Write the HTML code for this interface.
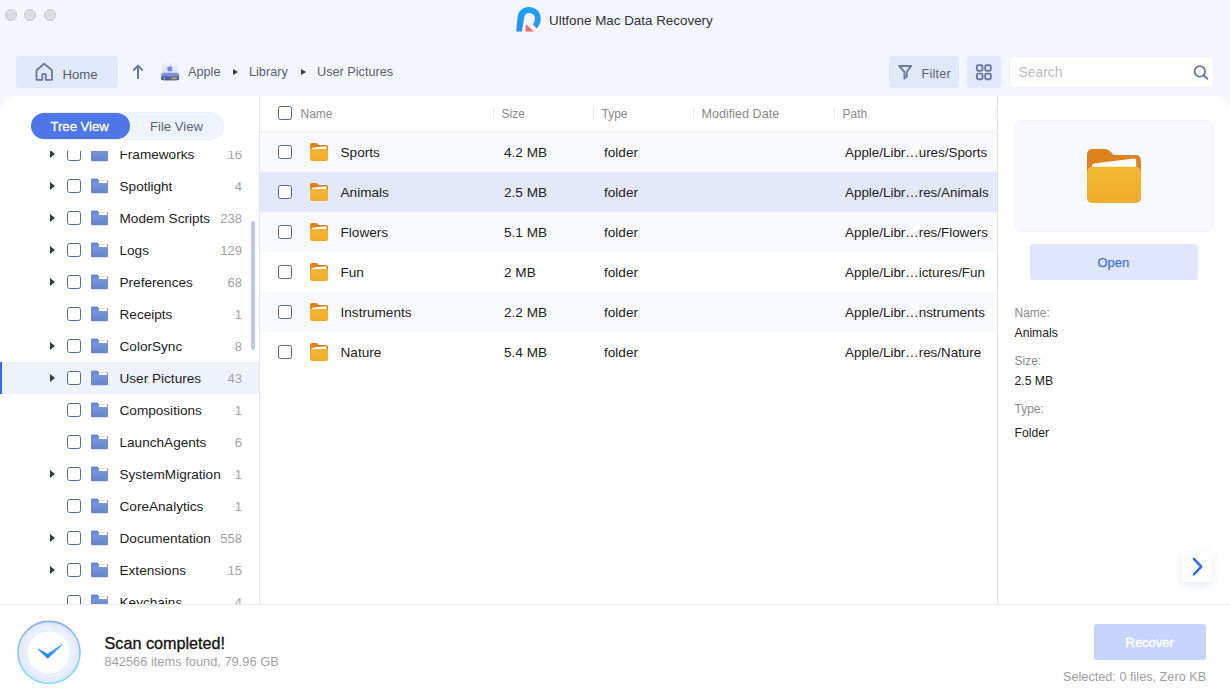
<!DOCTYPE html>
<html><head><meta charset="utf-8">
<style>
*{margin:0;padding:0;box-sizing:border-box}
html,body{width:1230px;height:700px;overflow:hidden;background:#f3f6fe;font-family:"Liberation Sans",sans-serif;color:#222}
.a{position:absolute}
.t{position:absolute;white-space:nowrap;line-height:1}
.dot{position:absolute;top:9px;width:12px;height:12px;border-radius:50%;background:#dcdde0;border:1px solid #c9cacd}
.btn{position:absolute;background:#e2e8fb;border-radius:4px}
.panel{position:absolute;left:0;top:96px;width:1230px;height:508px;background:#fff;border-radius:15px 15px 0 0}
.cb{position:absolute;width:14px;height:14px;border:1px solid #56679b;border-radius:2.5px;background:#fff}
.tri{position:absolute;width:0;height:0;border-left:5px solid #2f3a58;border-top:4px solid transparent;border-bottom:4px solid transparent}
.trow .name{font-size:13.6px;color:#222}
.cnt{position:absolute;font-size:13px;color:#a3a3a3;text-align:right;white-space:nowrap;line-height:1}
</style></head><body>
<!-- traffic lights -->
<div class="dot" style="left:5px"></div>
<div class="dot" style="left:24px"></div>
<div class="dot" style="left:44px"></div>

<!-- logo + title -->
<svg class="a" style="left:514px;top:5px" width="30" height="30" viewBox="0 0 30 30">
 <defs><linearGradient id="lg" x1="0" y1="0" x2="0" y2="1"><stop offset="0" stop-color="#1fa3f5"/><stop offset="1" stop-color="#2b8ef0"/></linearGradient></defs>
 <path d="M2.1 26.6 L3.6 12 C4.2 6 8.8 2 14.9 2 C21.5 2 26.8 7 26.8 13.8 C26.8 17.4 25.2 20.6 22.6 23.4 L18.9 19.3 C20.3 17.7 20.9 15.6 20.9 13.6 C20.9 10.4 18.4 8 15 8 C12.2 8 10.5 10 10.2 12.5 L7.8 26.6 Z" fill="url(#lg)"/>
 <path d="M11.7 18.9 L19.9 26.6 L11.7 26.6 Z" fill="#f26b6b"/>
</svg>
<div class="t" style="left:549px;top:14px;font-size:13.4px;color:#2f3136">Ultfone Mac Data Recovery</div>

<!-- toolbar -->
<div class="btn" style="left:16px;top:56px;width:102px;height:32px"></div>
<svg class="a" style="left:34px;top:62px" width="20" height="20" viewBox="0 0 20 20">
 <path d="M2.5 17.8 V8.2 L10.2 1.7 L18 8.2 V17.8 H11.8 V12.2 H8.3 V17.8 Z" fill="none" stroke="#6a78a2" stroke-width="1.8" stroke-linejoin="round"/>
</svg>
<div class="t" style="left:62.5px;top:67.5px;font-size:13.2px;color:#565b68">Home</div>
<svg class="a" style="left:130px;top:63px" width="16" height="18" viewBox="0 0 16 18">
 <path d="M8 15.2 V2.8 M3.9 6.9 L8 2.6 L12.1 6.9" fill="none" stroke="#6676a3" stroke-width="2" stroke-linecap="round" stroke-linejoin="round"/>
</svg>
<!-- drive icon -->
<svg class="a" style="left:160px;top:62px" width="20" height="20" viewBox="0 0 20 20">
 <defs><linearGradient id="dg" x1="0" y1="0" x2="0" y2="1"><stop offset="0" stop-color="#eff1fd"/><stop offset="1" stop-color="#d8dcf7"/></linearGradient>
 <linearGradient id="sg" x1="0" y1="0" x2="0" y2="1"><stop offset="0" stop-color="#8597e0"/><stop offset="1" stop-color="#6275c6"/></linearGradient></defs>
 <rect x="2.2" y="1" width="15.8" height="11" rx="2" fill="url(#dg)"/>
 <rect x="1.2" y="10.8" width="17.8" height="7.4" rx="2" fill="url(#sg)"/>
 <path d="M1.2 14.8 H19 V16.2 Q19 18.2 17 18.2 H3.2 Q1.2 18.2 1.2 16.2 Z" fill="#4d5c98"/>
 <circle cx="4.4" cy="16.4" r="0.75" fill="#86e8ff"/>
 <rect x="11.2" y="15.6" width="5.6" height="1.6" fill="#e2a956"/>
 <path d="M10 5.1 C10.6 4.4 11.7 4.5 12.2 5.1 C11.4 5.6 11.5 6.9 12.5 7.3 C12.2 8.2 11.6 9.4 10.9 9.4 C10.5 9.4 10.3 9.2 9.9 9.2 C9.5 9.2 9.2 9.4 8.8 9.4 C8 9.4 7.2 7.8 7.2 6.7 C7.2 5.3 8.2 4.6 9 4.7 C9.4 4.7 9.7 4.9 10 5.1 Z M10 4.5 C10 3.9 10.4 3.3 11 3.2 C11.1 3.8 10.6 4.5 10 4.5 Z" fill="#6a86e2"/>
</svg>
<div class="t" style="left:188px;top:66px;font-size:12.7px;color:#575f70">Apple</div>
<div class="a" style="left:233px;top:69px;width:0;height:0;border-left:5px solid #2f3a58;border-top:3px solid transparent;border-bottom:3px solid transparent"></div>
<div class="t" style="left:249px;top:66px;font-size:12.7px;color:#575f70">Library</div>
<div class="a" style="left:301px;top:69px;width:0;height:0;border-left:5px solid #2f3a58;border-top:3px solid transparent;border-bottom:3px solid transparent"></div>
<div class="t" style="left:317px;top:66px;font-size:12.7px;color:#575f70">User Pictures</div>

<div class="btn" style="left:889px;top:56px;width:70px;height:32px"></div>
<svg class="a" style="left:896px;top:63px" width="18" height="18" viewBox="0 0 18 18">
 <path d="M3.2 3 H15.2 L10.8 8.8 V13.4 L8.4 15.4 V8.8 Z" fill="none" stroke="#6a78a2" stroke-width="1.9" stroke-linejoin="round"/>
</svg>
<div class="t" style="left:921.5px;top:68px;font-size:12.5px;letter-spacing:0.3px;color:#575f70">Filter</div>
<div class="btn" style="left:967px;top:56px;width:34px;height:32px"></div>
<svg class="a" style="left:975px;top:63px" width="18" height="18" viewBox="0 0 18 18">
 <g fill="none" stroke="#6a78a2" stroke-width="1.9"><rect x="1.9" y="2.2" width="5.6" height="5.6" rx="1.2"/><rect x="10.2" y="2.2" width="5.6" height="5.6" rx="1.2"/><rect x="1.9" y="10.6" width="5.6" height="5.6" rx="1.2"/><rect x="10.2" y="10.6" width="5.6" height="5.6" rx="1.2"/></g>
</svg>
<div class="a" style="left:1010px;top:57px;width:203px;height:30px;background:#fff;border-radius:4px;box-shadow:0 0 0 0.5px #e9edf7"></div>
<div class="t" style="left:1018.5px;top:66px;font-size:13.9px;color:#bcbdc0">Search</div>
<svg class="a" style="left:1191px;top:62px" width="20" height="20" viewBox="0 0 20 20">
 <circle cx="8.8" cy="9.4" r="5.2" fill="none" stroke="#6676a3" stroke-width="1.8"/>
 <path d="M12.6 13.2 L16.4 16.8" stroke="#6676a3" stroke-width="1.9" stroke-linecap="round"/>
</svg>

<!-- main white panel -->
<div class="panel"></div>

<!-- sidebar -->
<div class="a" style="left:259px;top:96px;width:1px;height:508px;background:#e4e6ea"></div>
<div class="a" style="left:31px;top:112px;width:193px;height:28px;background:#eff3fb;border:1px solid #e9eef9;border-radius:14px"></div>
<div class="a" style="left:31px;top:113px;width:99px;height:26px;background:#4f76e9;border-radius:13px"></div>
<div class="t" style="left:50.5px;top:120px;font-size:13.1px;color:#fff;-webkit-text-stroke:0.3px #fff">Tree View</div>
<div class="t" style="left:150px;top:120px;font-size:13.1px;color:#5d6270">File View</div>
<div class="a" style="left:0;top:151px;width:259px;height:453px;overflow:hidden">
<div class="tri" style="left:50px;top:-1px;border-left-color:#2f3a58"></div>
<div class="cb" style="left:67px;top:-4px"></div>
<svg class="a" style="left:91px;top:-5px" width="17" height="16" viewBox="0 0 17 16"><defs><linearGradient id="bf0" x1="0" y1="0" x2="0" y2="1"><stop offset="0" stop-color="#7892da"/><stop offset="1" stop-color="#6783cc"/></linearGradient><linearGradient id="bp0" x1="0" y1="0" x2="0" y2="1"><stop offset="0" stop-color="#b9c3e3"/><stop offset="0.35" stop-color="#ffffff"/></linearGradient></defs><path d="M0 1.9 Q0 0.6 1.3 0.6 H6 Q6.5 0.6 6.9 1 L7.8 1.9 H15.7 Q17 1.9 17 3.2 V6 H0 Z" fill="#6d88d4"/><rect x="7.8" y="1.9" width="8.3" height="3.4" rx="0.6" fill="url(#bp0)"/><path d="M0 5.3 H17 V13.9 Q17 15.2 15.7 15.2 H1.3 Q0 15.2 0 13.9 Z" fill="url(#bf0)"/></svg>
<div class="t" style="left:119.5px;top:-3.5px;font-size:13.6px;color:#222">Frameworks</div>
<div class="cnt" style="right:17px;top:-3.5px">16</div>
<div class="tri" style="left:50px;top:31px;border-left-color:#2f3a58"></div>
<div class="cb" style="left:67px;top:28px"></div>
<svg class="a" style="left:91px;top:27px" width="17" height="16" viewBox="0 0 17 16"><defs><linearGradient id="bf1" x1="0" y1="0" x2="0" y2="1"><stop offset="0" stop-color="#7892da"/><stop offset="1" stop-color="#6783cc"/></linearGradient><linearGradient id="bp1" x1="0" y1="0" x2="0" y2="1"><stop offset="0" stop-color="#b9c3e3"/><stop offset="0.35" stop-color="#ffffff"/></linearGradient></defs><path d="M0 1.9 Q0 0.6 1.3 0.6 H6 Q6.5 0.6 6.9 1 L7.8 1.9 H15.7 Q17 1.9 17 3.2 V6 H0 Z" fill="#6d88d4"/><rect x="7.8" y="1.9" width="8.3" height="3.4" rx="0.6" fill="url(#bp1)"/><path d="M0 5.3 H17 V13.9 Q17 15.2 15.7 15.2 H1.3 Q0 15.2 0 13.9 Z" fill="url(#bf1)"/></svg>
<div class="t" style="left:119.5px;top:28.5px;font-size:13.6px;color:#222">Spotlight</div>
<div class="cnt" style="right:17px;top:28.5px">4</div>
<div class="tri" style="left:50px;top:63px;border-left-color:#2f3a58"></div>
<div class="cb" style="left:67px;top:60px"></div>
<svg class="a" style="left:91px;top:59px" width="17" height="16" viewBox="0 0 17 16"><defs><linearGradient id="bf2" x1="0" y1="0" x2="0" y2="1"><stop offset="0" stop-color="#7892da"/><stop offset="1" stop-color="#6783cc"/></linearGradient><linearGradient id="bp2" x1="0" y1="0" x2="0" y2="1"><stop offset="0" stop-color="#b9c3e3"/><stop offset="0.35" stop-color="#ffffff"/></linearGradient></defs><path d="M0 1.9 Q0 0.6 1.3 0.6 H6 Q6.5 0.6 6.9 1 L7.8 1.9 H15.7 Q17 1.9 17 3.2 V6 H0 Z" fill="#6d88d4"/><rect x="7.8" y="1.9" width="8.3" height="3.4" rx="0.6" fill="url(#bp2)"/><path d="M0 5.3 H17 V13.9 Q17 15.2 15.7 15.2 H1.3 Q0 15.2 0 13.9 Z" fill="url(#bf2)"/></svg>
<div class="t" style="left:119.5px;top:60.5px;font-size:13.6px;color:#222">Modem Scripts</div>
<div class="cnt" style="right:17px;top:60.5px">238</div>
<div class="tri" style="left:50px;top:95px;border-left-color:#2f3a58"></div>
<div class="cb" style="left:67px;top:92px"></div>
<svg class="a" style="left:91px;top:91px" width="17" height="16" viewBox="0 0 17 16"><defs><linearGradient id="bf3" x1="0" y1="0" x2="0" y2="1"><stop offset="0" stop-color="#7892da"/><stop offset="1" stop-color="#6783cc"/></linearGradient><linearGradient id="bp3" x1="0" y1="0" x2="0" y2="1"><stop offset="0" stop-color="#b9c3e3"/><stop offset="0.35" stop-color="#ffffff"/></linearGradient></defs><path d="M0 1.9 Q0 0.6 1.3 0.6 H6 Q6.5 0.6 6.9 1 L7.8 1.9 H15.7 Q17 1.9 17 3.2 V6 H0 Z" fill="#6d88d4"/><rect x="7.8" y="1.9" width="8.3" height="3.4" rx="0.6" fill="url(#bp3)"/><path d="M0 5.3 H17 V13.9 Q17 15.2 15.7 15.2 H1.3 Q0 15.2 0 13.9 Z" fill="url(#bf3)"/></svg>
<div class="t" style="left:119.5px;top:92.5px;font-size:13.6px;color:#222">Logs</div>
<div class="cnt" style="right:17px;top:92.5px">129</div>
<div class="tri" style="left:50px;top:127px;border-left-color:#2f3a58"></div>
<div class="cb" style="left:67px;top:124px"></div>
<svg class="a" style="left:91px;top:123px" width="17" height="16" viewBox="0 0 17 16"><defs><linearGradient id="bf4" x1="0" y1="0" x2="0" y2="1"><stop offset="0" stop-color="#7892da"/><stop offset="1" stop-color="#6783cc"/></linearGradient><linearGradient id="bp4" x1="0" y1="0" x2="0" y2="1"><stop offset="0" stop-color="#b9c3e3"/><stop offset="0.35" stop-color="#ffffff"/></linearGradient></defs><path d="M0 1.9 Q0 0.6 1.3 0.6 H6 Q6.5 0.6 6.9 1 L7.8 1.9 H15.7 Q17 1.9 17 3.2 V6 H0 Z" fill="#6d88d4"/><rect x="7.8" y="1.9" width="8.3" height="3.4" rx="0.6" fill="url(#bp4)"/><path d="M0 5.3 H17 V13.9 Q17 15.2 15.7 15.2 H1.3 Q0 15.2 0 13.9 Z" fill="url(#bf4)"/></svg>
<div class="t" style="left:119.5px;top:124.5px;font-size:13.6px;color:#222">Preferences</div>
<div class="cnt" style="right:17px;top:124.5px">68</div>
<div class="cb" style="left:67px;top:156px"></div>
<svg class="a" style="left:91px;top:155px" width="17" height="16" viewBox="0 0 17 16"><defs><linearGradient id="bf5" x1="0" y1="0" x2="0" y2="1"><stop offset="0" stop-color="#7892da"/><stop offset="1" stop-color="#6783cc"/></linearGradient><linearGradient id="bp5" x1="0" y1="0" x2="0" y2="1"><stop offset="0" stop-color="#b9c3e3"/><stop offset="0.35" stop-color="#ffffff"/></linearGradient></defs><path d="M0 1.9 Q0 0.6 1.3 0.6 H6 Q6.5 0.6 6.9 1 L7.8 1.9 H15.7 Q17 1.9 17 3.2 V6 H0 Z" fill="#6d88d4"/><rect x="7.8" y="1.9" width="8.3" height="3.4" rx="0.6" fill="url(#bp5)"/><path d="M0 5.3 H17 V13.9 Q17 15.2 15.7 15.2 H1.3 Q0 15.2 0 13.9 Z" fill="url(#bf5)"/></svg>
<div class="t" style="left:119.5px;top:156.5px;font-size:13.6px;color:#222">Receipts</div>
<div class="cnt" style="right:17px;top:156.5px">1</div>
<div class="tri" style="left:50px;top:191px;border-left-color:#2f3a58"></div>
<div class="cb" style="left:67px;top:188px"></div>
<svg class="a" style="left:91px;top:187px" width="17" height="16" viewBox="0 0 17 16"><defs><linearGradient id="bf6" x1="0" y1="0" x2="0" y2="1"><stop offset="0" stop-color="#7892da"/><stop offset="1" stop-color="#6783cc"/></linearGradient><linearGradient id="bp6" x1="0" y1="0" x2="0" y2="1"><stop offset="0" stop-color="#b9c3e3"/><stop offset="0.35" stop-color="#ffffff"/></linearGradient></defs><path d="M0 1.9 Q0 0.6 1.3 0.6 H6 Q6.5 0.6 6.9 1 L7.8 1.9 H15.7 Q17 1.9 17 3.2 V6 H0 Z" fill="#6d88d4"/><rect x="7.8" y="1.9" width="8.3" height="3.4" rx="0.6" fill="url(#bp6)"/><path d="M0 5.3 H17 V13.9 Q17 15.2 15.7 15.2 H1.3 Q0 15.2 0 13.9 Z" fill="url(#bf6)"/></svg>
<div class="t" style="left:119.5px;top:188.5px;font-size:13.6px;color:#222">ColorSync</div>
<div class="cnt" style="right:17px;top:188.5px">8</div>
<div class="a" style="left:0;top:211px;width:259px;height:32px;background:#eef2fd"></div>
<div class="a" style="left:0;top:211px;width:2px;height:32px;background:#2e6cf6"></div>
<div class="tri" style="left:50px;top:223px;border-left-color:#2f3a58"></div>
<div class="cb" style="left:67px;top:220px"></div>
<svg class="a" style="left:91px;top:219px" width="17" height="16" viewBox="0 0 17 16"><defs><linearGradient id="bf7" x1="0" y1="0" x2="0" y2="1"><stop offset="0" stop-color="#7892da"/><stop offset="1" stop-color="#6783cc"/></linearGradient><linearGradient id="bp7" x1="0" y1="0" x2="0" y2="1"><stop offset="0" stop-color="#b9c3e3"/><stop offset="0.35" stop-color="#ffffff"/></linearGradient></defs><path d="M0 1.9 Q0 0.6 1.3 0.6 H6 Q6.5 0.6 6.9 1 L7.8 1.9 H15.7 Q17 1.9 17 3.2 V6 H0 Z" fill="#6d88d4"/><rect x="7.8" y="1.9" width="8.3" height="3.4" rx="0.6" fill="url(#bp7)"/><path d="M0 5.3 H17 V13.9 Q17 15.2 15.7 15.2 H1.3 Q0 15.2 0 13.9 Z" fill="url(#bf7)"/></svg>
<div class="t" style="left:119.5px;top:220.5px;font-size:13.6px;color:#222">User Pictures</div>
<div class="cnt" style="right:17px;top:220.5px">43</div>
<div class="cb" style="left:67px;top:252px"></div>
<svg class="a" style="left:91px;top:251px" width="17" height="16" viewBox="0 0 17 16"><defs><linearGradient id="bf8" x1="0" y1="0" x2="0" y2="1"><stop offset="0" stop-color="#7892da"/><stop offset="1" stop-color="#6783cc"/></linearGradient><linearGradient id="bp8" x1="0" y1="0" x2="0" y2="1"><stop offset="0" stop-color="#b9c3e3"/><stop offset="0.35" stop-color="#ffffff"/></linearGradient></defs><path d="M0 1.9 Q0 0.6 1.3 0.6 H6 Q6.5 0.6 6.9 1 L7.8 1.9 H15.7 Q17 1.9 17 3.2 V6 H0 Z" fill="#6d88d4"/><rect x="7.8" y="1.9" width="8.3" height="3.4" rx="0.6" fill="url(#bp8)"/><path d="M0 5.3 H17 V13.9 Q17 15.2 15.7 15.2 H1.3 Q0 15.2 0 13.9 Z" fill="url(#bf8)"/></svg>
<div class="t" style="left:119.5px;top:252.5px;font-size:13.6px;color:#222">Compositions</div>
<div class="cnt" style="right:17px;top:252.5px">1</div>
<div class="cb" style="left:67px;top:284px"></div>
<svg class="a" style="left:91px;top:283px" width="17" height="16" viewBox="0 0 17 16"><defs><linearGradient id="bf9" x1="0" y1="0" x2="0" y2="1"><stop offset="0" stop-color="#7892da"/><stop offset="1" stop-color="#6783cc"/></linearGradient><linearGradient id="bp9" x1="0" y1="0" x2="0" y2="1"><stop offset="0" stop-color="#b9c3e3"/><stop offset="0.35" stop-color="#ffffff"/></linearGradient></defs><path d="M0 1.9 Q0 0.6 1.3 0.6 H6 Q6.5 0.6 6.9 1 L7.8 1.9 H15.7 Q17 1.9 17 3.2 V6 H0 Z" fill="#6d88d4"/><rect x="7.8" y="1.9" width="8.3" height="3.4" rx="0.6" fill="url(#bp9)"/><path d="M0 5.3 H17 V13.9 Q17 15.2 15.7 15.2 H1.3 Q0 15.2 0 13.9 Z" fill="url(#bf9)"/></svg>
<div class="t" style="left:119.5px;top:284.5px;font-size:13.6px;color:#222">LaunchAgents</div>
<div class="cnt" style="right:17px;top:284.5px">6</div>
<div class="tri" style="left:50px;top:319px;border-left-color:#2f3a58"></div>
<div class="cb" style="left:67px;top:316px"></div>
<svg class="a" style="left:91px;top:315px" width="17" height="16" viewBox="0 0 17 16"><defs><linearGradient id="bf10" x1="0" y1="0" x2="0" y2="1"><stop offset="0" stop-color="#7892da"/><stop offset="1" stop-color="#6783cc"/></linearGradient><linearGradient id="bp10" x1="0" y1="0" x2="0" y2="1"><stop offset="0" stop-color="#b9c3e3"/><stop offset="0.35" stop-color="#ffffff"/></linearGradient></defs><path d="M0 1.9 Q0 0.6 1.3 0.6 H6 Q6.5 0.6 6.9 1 L7.8 1.9 H15.7 Q17 1.9 17 3.2 V6 H0 Z" fill="#6d88d4"/><rect x="7.8" y="1.9" width="8.3" height="3.4" rx="0.6" fill="url(#bp10)"/><path d="M0 5.3 H17 V13.9 Q17 15.2 15.7 15.2 H1.3 Q0 15.2 0 13.9 Z" fill="url(#bf10)"/></svg>
<div class="t" style="left:119.5px;top:316.5px;font-size:13.6px;color:#222">SystemMigration</div>
<div class="cnt" style="right:17px;top:316.5px">1</div>
<div class="cb" style="left:67px;top:348px"></div>
<svg class="a" style="left:91px;top:347px" width="17" height="16" viewBox="0 0 17 16"><defs><linearGradient id="bf11" x1="0" y1="0" x2="0" y2="1"><stop offset="0" stop-color="#7892da"/><stop offset="1" stop-color="#6783cc"/></linearGradient><linearGradient id="bp11" x1="0" y1="0" x2="0" y2="1"><stop offset="0" stop-color="#b9c3e3"/><stop offset="0.35" stop-color="#ffffff"/></linearGradient></defs><path d="M0 1.9 Q0 0.6 1.3 0.6 H6 Q6.5 0.6 6.9 1 L7.8 1.9 H15.7 Q17 1.9 17 3.2 V6 H0 Z" fill="#6d88d4"/><rect x="7.8" y="1.9" width="8.3" height="3.4" rx="0.6" fill="url(#bp11)"/><path d="M0 5.3 H17 V13.9 Q17 15.2 15.7 15.2 H1.3 Q0 15.2 0 13.9 Z" fill="url(#bf11)"/></svg>
<div class="t" style="left:119.5px;top:348.5px;font-size:13.6px;color:#222">CoreAnalytics</div>
<div class="cnt" style="right:17px;top:348.5px">1</div>
<div class="tri" style="left:50px;top:383px;border-left-color:#2f3a58"></div>
<div class="cb" style="left:67px;top:380px"></div>
<svg class="a" style="left:91px;top:379px" width="17" height="16" viewBox="0 0 17 16"><defs><linearGradient id="bf12" x1="0" y1="0" x2="0" y2="1"><stop offset="0" stop-color="#7892da"/><stop offset="1" stop-color="#6783cc"/></linearGradient><linearGradient id="bp12" x1="0" y1="0" x2="0" y2="1"><stop offset="0" stop-color="#b9c3e3"/><stop offset="0.35" stop-color="#ffffff"/></linearGradient></defs><path d="M0 1.9 Q0 0.6 1.3 0.6 H6 Q6.5 0.6 6.9 1 L7.8 1.9 H15.7 Q17 1.9 17 3.2 V6 H0 Z" fill="#6d88d4"/><rect x="7.8" y="1.9" width="8.3" height="3.4" rx="0.6" fill="url(#bp12)"/><path d="M0 5.3 H17 V13.9 Q17 15.2 15.7 15.2 H1.3 Q0 15.2 0 13.9 Z" fill="url(#bf12)"/></svg>
<div class="t" style="left:119.5px;top:380.5px;font-size:13.6px;color:#222">Documentation</div>
<div class="cnt" style="right:17px;top:380.5px">558</div>
<div class="tri" style="left:50px;top:415px;border-left-color:#2f3a58"></div>
<div class="cb" style="left:67px;top:412px"></div>
<svg class="a" style="left:91px;top:411px" width="17" height="16" viewBox="0 0 17 16"><defs><linearGradient id="bf13" x1="0" y1="0" x2="0" y2="1"><stop offset="0" stop-color="#7892da"/><stop offset="1" stop-color="#6783cc"/></linearGradient><linearGradient id="bp13" x1="0" y1="0" x2="0" y2="1"><stop offset="0" stop-color="#b9c3e3"/><stop offset="0.35" stop-color="#ffffff"/></linearGradient></defs><path d="M0 1.9 Q0 0.6 1.3 0.6 H6 Q6.5 0.6 6.9 1 L7.8 1.9 H15.7 Q17 1.9 17 3.2 V6 H0 Z" fill="#6d88d4"/><rect x="7.8" y="1.9" width="8.3" height="3.4" rx="0.6" fill="url(#bp13)"/><path d="M0 5.3 H17 V13.9 Q17 15.2 15.7 15.2 H1.3 Q0 15.2 0 13.9 Z" fill="url(#bf13)"/></svg>
<div class="t" style="left:119.5px;top:412.5px;font-size:13.6px;color:#222">Extensions</div>
<div class="cnt" style="right:17px;top:412.5px">15</div>
<div class="cb" style="left:67px;top:444px"></div>
<svg class="a" style="left:91px;top:443px" width="17" height="16" viewBox="0 0 17 16"><defs><linearGradient id="bf14" x1="0" y1="0" x2="0" y2="1"><stop offset="0" stop-color="#7892da"/><stop offset="1" stop-color="#6783cc"/></linearGradient><linearGradient id="bp14" x1="0" y1="0" x2="0" y2="1"><stop offset="0" stop-color="#b9c3e3"/><stop offset="0.35" stop-color="#ffffff"/></linearGradient></defs><path d="M0 1.9 Q0 0.6 1.3 0.6 H6 Q6.5 0.6 6.9 1 L7.8 1.9 H15.7 Q17 1.9 17 3.2 V6 H0 Z" fill="#6d88d4"/><rect x="7.8" y="1.9" width="8.3" height="3.4" rx="0.6" fill="url(#bp14)"/><path d="M0 5.3 H17 V13.9 Q17 15.2 15.7 15.2 H1.3 Q0 15.2 0 13.9 Z" fill="url(#bf14)"/></svg>
<div class="t" style="left:119.5px;top:444.5px;font-size:13.6px;color:#222">Keychains</div>
<div class="cnt" style="right:17px;top:444.5px">4</div>
</div>
<div class="a" style="left:251px;top:221px;width:4px;height:129px;background:#bdcaf2;border-radius:2px"></div>
<!-- table -->
<div class="a" style="left:997px;top:96px;width:1px;height:508px;background:#e1e2e6"></div>
<div class="a" style="left:260px;top:131px;width:737px;height:1px;background:#edf0f9"></div>
<div class="cb" style="left:278px;top:106px"></div>
<div class="t" style="left:300.5px;top:107.5px;font-size:12px;color:#8a8a8a">Name</div>
<div class="a" style="left:493px;top:107px;width:1px;height:13px;background:#e4e8f5"></div>
<div class="t" style="left:501.5px;top:107.5px;font-size:12px;color:#8a8a8a">Size</div>
<div class="a" style="left:593px;top:107px;width:1px;height:13px;background:#e4e8f5"></div>
<div class="t" style="left:601.5px;top:107.5px;font-size:12px;color:#8a8a8a">Type</div>
<div class="a" style="left:693px;top:107px;width:1px;height:13px;background:#e4e8f5"></div>
<div class="t" style="left:701.5px;top:107.5px;font-size:12.6px;color:#8a8a8a">Modified Date</div>
<div class="a" style="left:834px;top:107px;width:1px;height:13px;background:#e4e8f5"></div>
<div class="t" style="left:842.5px;top:107.5px;font-size:12px;color:#8a8a8a">Path</div>
<div class="a" style="left:995px;top:108px;width:1px;height:12px;background:#eceef8"></div>
<div class="a" style="left:260px;top:132px;width:737px;height:40px;background:#f9fafe"></div>
<div class="cb" style="left:278px;top:145px"></div>
<svg class="a" style="left:310px;top:143px" width="18" height="18" viewBox="0 0 18 18"><defs><linearGradient id="of0" x1="0" y1="0" x2="0" y2="1"><stop offset="0" stop-color="#f4b734"/><stop offset="1" stop-color="#efac2a"/></linearGradient></defs><path d="M0 1.9 Q0 0 1.9 0 H6 Q6.9 0 7.5 0.6 L8.9 2 H16.1 Q18 2 18 3.9 V10 H0 Z" fill="#dc8320"/><path d="M1.7 5.6 Q1.7 4.9 2.4 4.8 L15.6 3.2 Q16.4 3.1 16.4 3.9 V9 H1.7 Z" fill="#fff"/><path d="M0 7.8 Q0 5.9 1.9 5.9 H16.1 Q18 5.9 18 7.8 V16.1 Q18 18 16.1 18 H1.9 Q0 18 0 16.1 Z" fill="url(#of0)"/></svg>
<div class="t" style="left:340.5px;top:145.5px;font-size:13.6px;color:#222">Sports</div>
<div class="t" style="left:504px;top:145.5px;font-size:13.6px;color:#222">4.2 MB</div>
<div class="t" style="left:604px;top:145.5px;font-size:13.6px;color:#222">folder</div>
<div class="t" style="left:845px;top:145.5px;font-size:13.4px;color:#222">Apple/Libr…ures/Sports</div>
<div class="a" style="left:260px;top:172px;width:737px;height:40px;background:#e3e8fa"></div>
<div class="cb" style="left:278px;top:185px"></div>
<svg class="a" style="left:310px;top:183px" width="18" height="18" viewBox="0 0 18 18"><defs><linearGradient id="of1" x1="0" y1="0" x2="0" y2="1"><stop offset="0" stop-color="#f4b734"/><stop offset="1" stop-color="#efac2a"/></linearGradient></defs><path d="M0 1.9 Q0 0 1.9 0 H6 Q6.9 0 7.5 0.6 L8.9 2 H16.1 Q18 2 18 3.9 V10 H0 Z" fill="#dc8320"/><path d="M1.7 5.6 Q1.7 4.9 2.4 4.8 L15.6 3.2 Q16.4 3.1 16.4 3.9 V9 H1.7 Z" fill="#fff"/><path d="M0 7.8 Q0 5.9 1.9 5.9 H16.1 Q18 5.9 18 7.8 V16.1 Q18 18 16.1 18 H1.9 Q0 18 0 16.1 Z" fill="url(#of1)"/></svg>
<div class="t" style="left:340.5px;top:185.5px;font-size:13.6px;color:#222">Animals</div>
<div class="t" style="left:504px;top:185.5px;font-size:13.6px;color:#222">2.5 MB</div>
<div class="t" style="left:604px;top:185.5px;font-size:13.6px;color:#222">folder</div>
<div class="t" style="left:845px;top:185.5px;font-size:13.4px;color:#222">Apple/Libr…res/Animals</div>
<div class="a" style="left:260px;top:212px;width:737px;height:40px;background:#f9fafe"></div>
<div class="cb" style="left:278px;top:225px"></div>
<svg class="a" style="left:310px;top:223px" width="18" height="18" viewBox="0 0 18 18"><defs><linearGradient id="of2" x1="0" y1="0" x2="0" y2="1"><stop offset="0" stop-color="#f4b734"/><stop offset="1" stop-color="#efac2a"/></linearGradient></defs><path d="M0 1.9 Q0 0 1.9 0 H6 Q6.9 0 7.5 0.6 L8.9 2 H16.1 Q18 2 18 3.9 V10 H0 Z" fill="#dc8320"/><path d="M1.7 5.6 Q1.7 4.9 2.4 4.8 L15.6 3.2 Q16.4 3.1 16.4 3.9 V9 H1.7 Z" fill="#fff"/><path d="M0 7.8 Q0 5.9 1.9 5.9 H16.1 Q18 5.9 18 7.8 V16.1 Q18 18 16.1 18 H1.9 Q0 18 0 16.1 Z" fill="url(#of2)"/></svg>
<div class="t" style="left:340.5px;top:225.5px;font-size:13.6px;color:#222">Flowers</div>
<div class="t" style="left:504px;top:225.5px;font-size:13.6px;color:#222">5.1 MB</div>
<div class="t" style="left:604px;top:225.5px;font-size:13.6px;color:#222">folder</div>
<div class="t" style="left:845px;top:225.5px;font-size:13.4px;color:#222">Apple/Libr…res/Flowers</div>
<div class="a" style="left:260px;top:252px;width:737px;height:40px;background:#ffffff"></div>
<div class="cb" style="left:278px;top:265px"></div>
<svg class="a" style="left:310px;top:263px" width="18" height="18" viewBox="0 0 18 18"><defs><linearGradient id="of3" x1="0" y1="0" x2="0" y2="1"><stop offset="0" stop-color="#f4b734"/><stop offset="1" stop-color="#efac2a"/></linearGradient></defs><path d="M0 1.9 Q0 0 1.9 0 H6 Q6.9 0 7.5 0.6 L8.9 2 H16.1 Q18 2 18 3.9 V10 H0 Z" fill="#dc8320"/><path d="M1.7 5.6 Q1.7 4.9 2.4 4.8 L15.6 3.2 Q16.4 3.1 16.4 3.9 V9 H1.7 Z" fill="#fff"/><path d="M0 7.8 Q0 5.9 1.9 5.9 H16.1 Q18 5.9 18 7.8 V16.1 Q18 18 16.1 18 H1.9 Q0 18 0 16.1 Z" fill="url(#of3)"/></svg>
<div class="t" style="left:340.5px;top:265.5px;font-size:13.6px;color:#222">Fun</div>
<div class="t" style="left:504px;top:265.5px;font-size:13.6px;color:#222">2 MB</div>
<div class="t" style="left:604px;top:265.5px;font-size:13.6px;color:#222">folder</div>
<div class="t" style="left:845px;top:265.5px;font-size:13.4px;color:#222">Apple/Libr…ictures/Fun</div>
<div class="a" style="left:260px;top:292px;width:737px;height:40px;background:#f9fafe"></div>
<div class="cb" style="left:278px;top:305px"></div>
<svg class="a" style="left:310px;top:303px" width="18" height="18" viewBox="0 0 18 18"><defs><linearGradient id="of4" x1="0" y1="0" x2="0" y2="1"><stop offset="0" stop-color="#f4b734"/><stop offset="1" stop-color="#efac2a"/></linearGradient></defs><path d="M0 1.9 Q0 0 1.9 0 H6 Q6.9 0 7.5 0.6 L8.9 2 H16.1 Q18 2 18 3.9 V10 H0 Z" fill="#dc8320"/><path d="M1.7 5.6 Q1.7 4.9 2.4 4.8 L15.6 3.2 Q16.4 3.1 16.4 3.9 V9 H1.7 Z" fill="#fff"/><path d="M0 7.8 Q0 5.9 1.9 5.9 H16.1 Q18 5.9 18 7.8 V16.1 Q18 18 16.1 18 H1.9 Q0 18 0 16.1 Z" fill="url(#of4)"/></svg>
<div class="t" style="left:340.5px;top:305.5px;font-size:13.6px;color:#222">Instruments</div>
<div class="t" style="left:504px;top:305.5px;font-size:13.6px;color:#222">2.2 MB</div>
<div class="t" style="left:604px;top:305.5px;font-size:13.6px;color:#222">folder</div>
<div class="t" style="left:845px;top:305.5px;font-size:13.4px;color:#222">Apple/Libr…nstruments</div>
<div class="a" style="left:260px;top:332px;width:737px;height:40px;background:#ffffff"></div>
<div class="cb" style="left:278px;top:345px"></div>
<svg class="a" style="left:310px;top:343px" width="18" height="18" viewBox="0 0 18 18"><defs><linearGradient id="of5" x1="0" y1="0" x2="0" y2="1"><stop offset="0" stop-color="#f4b734"/><stop offset="1" stop-color="#efac2a"/></linearGradient></defs><path d="M0 1.9 Q0 0 1.9 0 H6 Q6.9 0 7.5 0.6 L8.9 2 H16.1 Q18 2 18 3.9 V10 H0 Z" fill="#dc8320"/><path d="M1.7 5.6 Q1.7 4.9 2.4 4.8 L15.6 3.2 Q16.4 3.1 16.4 3.9 V9 H1.7 Z" fill="#fff"/><path d="M0 7.8 Q0 5.9 1.9 5.9 H16.1 Q18 5.9 18 7.8 V16.1 Q18 18 16.1 18 H1.9 Q0 18 0 16.1 Z" fill="url(#of5)"/></svg>
<div class="t" style="left:340.5px;top:345.5px;font-size:13.6px;color:#222">Nature</div>
<div class="t" style="left:504px;top:345.5px;font-size:13.6px;color:#222">5.4 MB</div>
<div class="t" style="left:604px;top:345.5px;font-size:13.6px;color:#222">folder</div>
<div class="t" style="left:845px;top:345.5px;font-size:13.4px;color:#222">Apple/Libr…res/Nature</div>
<!-- right -->
<div class="a" style="left:1014px;top:120px;width:200px;height:112px;background:#f6f8fe;border:1px solid #f0f3fb;border-radius:7px"></div>
<svg class="a" style="left:1087px;top:149px" width="54" height="54" viewBox="0 0 18 18"><defs><linearGradient id="of99" x1="0" y1="0" x2="0" y2="1"><stop offset="0" stop-color="#f4b734"/><stop offset="1" stop-color="#efac2a"/></linearGradient></defs><path d="M0 1.9 Q0 0 1.9 0 H6 Q6.9 0 7.5 0.6 L8.9 2 H16.1 Q18 2 18 3.9 V10 H0 Z" fill="#dc8320"/><path d="M1.7 5.6 Q1.7 4.9 2.4 4.8 L15.6 3.2 Q16.4 3.1 16.4 3.9 V9 H1.7 Z" fill="#fff"/><path d="M0 7.8 Q0 5.9 1.9 5.9 H16.1 Q18 5.9 18 7.8 V16.1 Q18 18 16.1 18 H1.9 Q0 18 0 16.1 Z" fill="url(#of99)"/></svg>
<div class="a" style="left:1030px;top:244px;width:168px;height:35.5px;background:#dfe6fd;border-radius:3px"></div>
<div class="t" style="left:1097.5px;top:256px;font-size:13px;color:#3f74ee;-webkit-text-stroke:0.25px #3f74ee">Open</div>
<div class="t" style="left:1014.5px;top:307px;font-size:12px;color:#8a8a8a">Name:</div>
<div class="t" style="left:1014.5px;top:327px;font-size:12.2px;color:#222">Animals</div>
<div class="t" style="left:1014.5px;top:355px;font-size:12px;color:#8a8a8a">Size:</div>
<div class="t" style="left:1014.5px;top:375px;font-size:12.2px;color:#222">2.5 MB</div>
<div class="t" style="left:1014.5px;top:403px;font-size:12px;color:#8a8a8a">Type:</div>
<div class="t" style="left:1014.5px;top:427px;font-size:12.2px;color:#222">Folder</div>
<div class="a" style="left:1182px;top:551.5px;width:30px;height:30px;background:#fff;border-radius:2px;box-shadow:0 3px 9px rgba(90,110,180,0.16)"></div>
<svg class="a" style="left:1182px;top:551px" width="31" height="31" viewBox="0 0 31 31"><path d="M11.9 7.8 L19.3 15.6 L11.9 23.4" fill="none" stroke="#2e6cf6" stroke-width="2.5" stroke-linecap="round" stroke-linejoin="round"/></svg>
<!-- bottom -->
<div class="a" style="left:0;top:604px;width:1230px;height:96px;background:#fff;border-top:1px solid #e8ebf5"></div>
<svg class="a" style="left:17px;top:620px" width="64" height="64" viewBox="0 0 64 64"><defs>
<linearGradient id="ring" x1="0" y1="0" x2="0" y2="1"><stop offset="0" stop-color="#8bb0f3"/><stop offset="1" stop-color="#86e3f6"/></linearGradient>
<radialGradient id="fill" cx="0.5" cy="0.5" r="0.5"><stop offset="0.6" stop-color="#f3f6fe"/><stop offset="1" stop-color="#dfe7fb"/></radialGradient>
<linearGradient id="chk" x1="0.3" y1="1" x2="1" y2="0"><stop offset="0" stop-color="#2f80f0"/><stop offset="1" stop-color="#35c0fa"/></linearGradient></defs>
<circle cx="32" cy="32.4" r="31" fill="url(#fill)" stroke="url(#ring)" stroke-width="1.7"/>
<circle cx="31.6" cy="32.6" r="21.8" fill="#fff" stroke="#d4eefa" stroke-width="0.9"/>
<path d="M21 29.1 Q21.1 28.6 21.6 28.8 L30.5 33.8 L45.2 23.9 Q46.1 23.5 45.9 24.5 L31.6 38.1 Q30.8 38.9 30 38.1 L21.1 29.8 Z" fill="url(#chk)"/></svg>
<div class="t" style="left:104.5px;top:635px;font-size:16.2px;color:#111;-webkit-text-stroke:0.3px #111">Scan completed!</div>
<div class="t" style="left:104.5px;top:656px;font-size:12.85px;color:#a2a2a2">842566 items found, 79.96 GB</div>
<div class="a" style="left:1094px;top:624px;width:112px;height:36px;background:#c6d4fb;border-radius:3px"></div>
<div class="t" style="left:1125.5px;top:636px;font-size:13px;color:#fff;-webkit-text-stroke:0.4px #fff">Recover</div>
<div class="t" style="left:1063px;top:671px;font-size:12.7px;color:#a0a0a0">Selected: 0 files, Zero KB</div>
</body></html>
